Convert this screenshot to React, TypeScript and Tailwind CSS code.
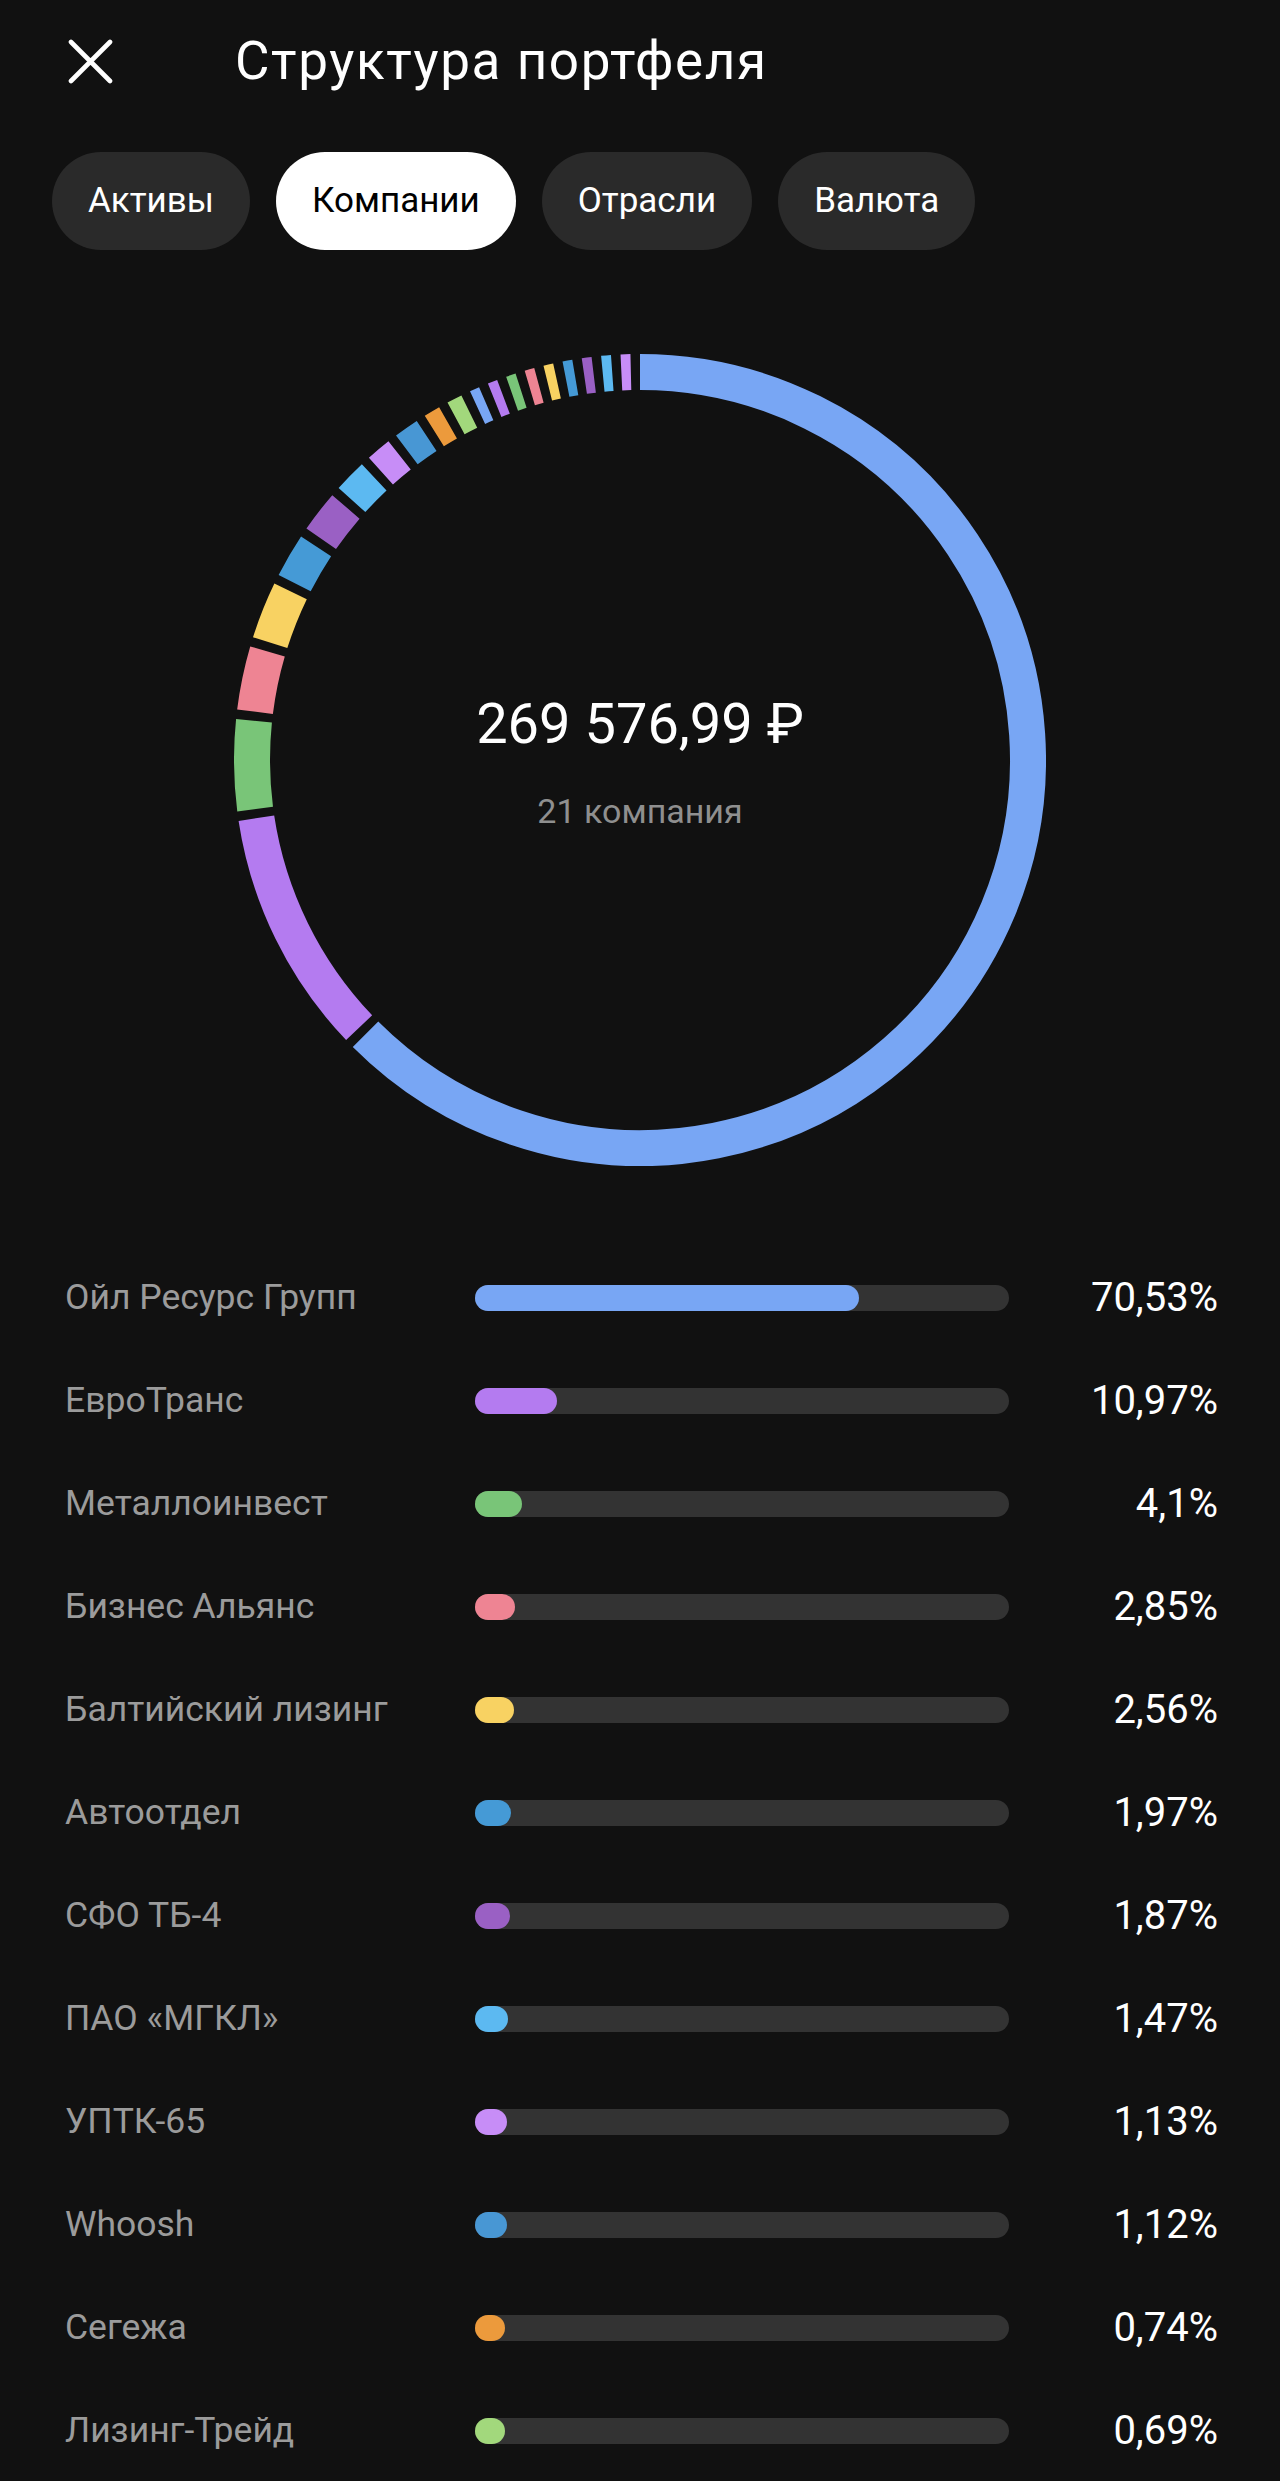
import { useMemo } from "react";

const font = { fontFamily: "Roboto, 'Noto Sans', sans-serif" };

const companies = [
  { name: "Ойл Ресурс Групп", pct: 70.53, label: "70,53%", color: "#78a6f4" },
  { name: "ЕвроТранс", pct: 10.97, label: "10,97%", color: "#b47bf0" },
  { name: "Металлоинвест", pct: 4.1, label: "4,1%", color: "#79c578" },
  { name: "Бизнес Альянс", pct: 2.85, label: "2,85%", color: "#ee8493" },
  { name: "Балтийский лизинг", pct: 2.56, label: "2,56%", color: "#f8d262" },
  { name: "Автоотдел", pct: 1.97, label: "1,97%", color: "#459ad6" },
  { name: "СФО ТБ-4", pct: 1.87, label: "1,87%", color: "#9a60c4" },
  { name: "ПАО «МГКЛ»", pct: 1.47, label: "1,47%", color: "#5cb9f1" },
  { name: "УПТК-65", pct: 1.13, label: "1,13%", color: "#c78df7" },
  { name: "Whoosh", pct: 1.12, label: "1,12%", color: "#4897d4" },
  { name: "Сегежа", pct: 0.74, label: "0,74%", color: "#ec9a3c" },
  { name: "Лизинг-Трейд", pct: 0.69, label: "0,69%", color: "#a2d87c" },
];

// the rest of the 21 companies are below the fold, tiny slices
const tail = ["#78a6f4", "#b47bf0", "#79c578", "#ee8493", "#f8d262", "#459ad6", "#9a60c4", "#5cb9f1", "#c78df7"];

const GAP = 1.35;
const MIN = 1.4;

function arc(cx: number, cy: number, r: number, a0: number, a1: number) {
  const rad = (a: number) => (a * Math.PI) / 180;
  const x0 = cx + r * Math.sin(rad(a0));
  const y0 = cy - r * Math.cos(rad(a0));
  const x1 = cx + r * Math.sin(rad(a1));
  const y1 = cy - r * Math.cos(rad(a1));
  const large = a1 - a0 > 180 ? 1 : 0;
  return `M ${x0} ${y0} A ${r} ${r} 0 ${large} 1 ${x1} ${y1}`;
}

function Donut() {
  const slices = useMemo(() => {
    const all = [
      ...companies.map((c) => ({ pct: c.pct, color: c.color })),
      ...tail.map((color) => ({ pct: 0, color })),
    ];
    const scale = (360 - all.length * GAP - tail.length * MIN) / 100;
    let a = 0;
    return all.map((s) => {
      const size = Math.max(s.pct * scale, MIN);
      const out = { a0: a, a1: a + size, color: s.color };
      a += size + GAP;
      return out;
    });
  }, []);

  return (
    <div className="relative mx-auto h-[812px] w-[812px]">
      <svg width="812" height="812" viewBox="0 0 812 812">
        {slices.map((s, i) => (
          <path key={i} d={arc(406, 406, 388, s.a0, s.a1)} stroke={s.color} strokeWidth="36" fill="none" />
        ))}
      </svg>
      <div className="absolute inset-0 flex flex-col items-center justify-center pt-[4px]">
        <div className="text-[56px] leading-[64px] text-white">269 576,99 ₽</div>
        <div className="mt-[33px] text-[34px] leading-[44px] text-[#8f8f8f]">21 компания</div>
      </div>
    </div>
  );
}

const tabs = ["Активы", "Компании", "Отрасли", "Валюта"];

export default function App() {
  return (
    <div className="min-h-[2481px] w-full overflow-hidden bg-[#111111]" style={font}>
      <header className="flex h-[122px] items-center pl-[68px]">
        <svg width="45" height="45" viewBox="0 0 45 45">
          <path d="M3 3 L42 42 M42 3 L3 42" stroke="white" strokeWidth="4.6" strokeLinecap="round" />
        </svg>
        <h1 className="ml-[122px] text-[53px] font-normal leading-none tracking-[0.03em] text-white">
          Структура портфеля
        </h1>
      </header>

      <div className="mt-[30px] flex gap-[26px] pl-[52px]">
        {tabs.map((t) => (
          <button
            key={t}
            className={
              t === "Компании"
                ? "h-[98px] rounded-full bg-white px-[36px] text-[35px] text-black"
                : "h-[98px] rounded-full bg-[#2a2a2a] px-[36px] text-[35px] text-white"
            }
          >
            {t}
          </button>
        ))}
      </div>

      <div className="mt-[104px]">
        <Donut />
      </div>

      <div className="mt-[80px] pl-[65px] pr-[62px]">
        {companies.map((c) => (
          <div key={c.name} className="flex h-[103px] items-center">
            <div className="w-[410px] truncate text-[35.5px] text-[#9b9b9b]">{c.name}</div>
            <div className="h-[26px] w-[534px] rounded-full bg-[#333333]">
              <div className="h-full rounded-full" style={{ width: 26 + c.pct * 5.08, backgroundColor: c.color }} />
            </div>
            <div className="flex-1 text-right text-[40px] text-white">{c.label}</div>
          </div>
        ))}
      </div>
    </div>
  );
}
